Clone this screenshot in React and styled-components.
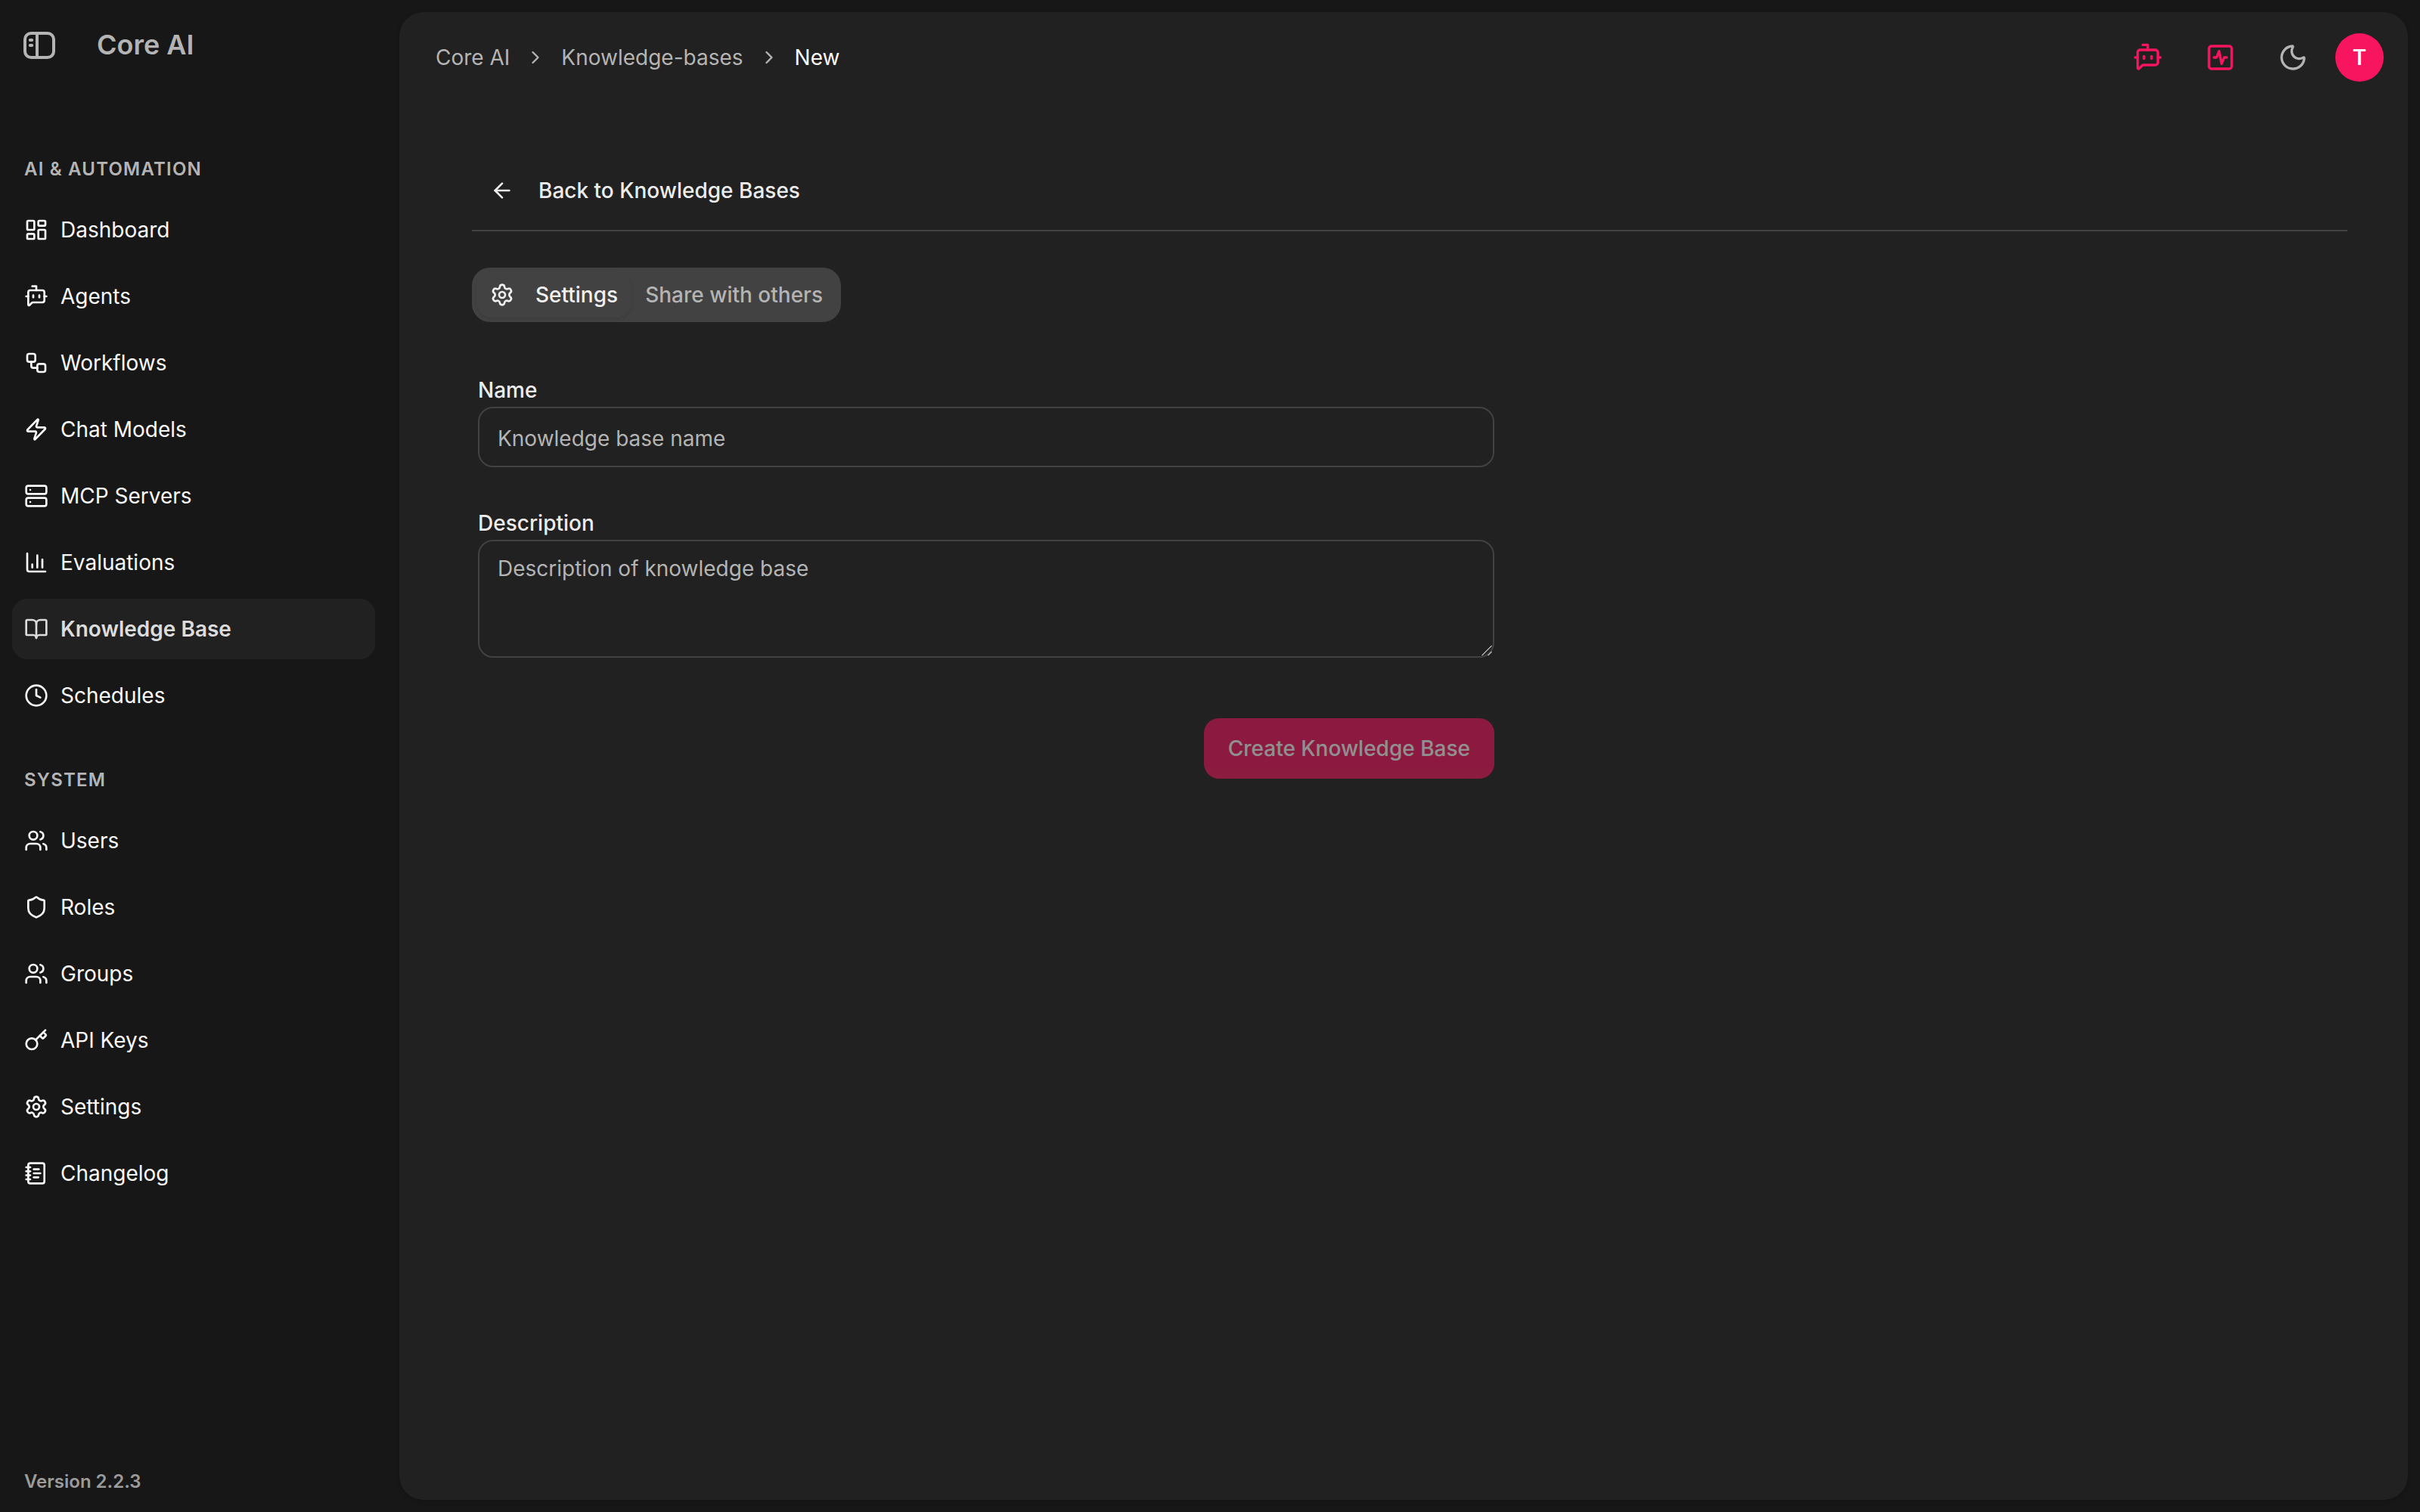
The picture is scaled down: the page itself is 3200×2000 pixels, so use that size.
import React, { useState } from 'react';
import styled, { createGlobalStyle, css } from 'styled-components';
import {
  LayoutDashboard,
  BotMessageSquare,
  Workflow,
  Zap,
  Server,
  BookOpen,
  Clock,
  Users,
  Shield,
  Key,
  Settings,
  NotebookText,
  ChevronRight,
  ArrowLeft,
  SquareActivity,
  Moon,
} from 'lucide-react';

const GlobalStyle = createGlobalStyle`
  * {
    box-sizing: border-box;
  }
  body {
    margin: 0;
    background: #171717;
    color: #ececec;
    font-family: Inter, "Liberation Sans", sans-serif;
    font-size: 28px;
    line-height: 40px;
    font-variation-settings: 'opsz' 14;
    -webkit-font-smoothing: antialiased;
  }
  button, input, textarea {
    font: inherit;
    font-variation-settings: inherit;
    color: inherit;
  }
`;

// bar chart with a short first bar
const EvaluationsIcon = ({ size = 24 }) => (
  <svg
    width={size}
    height={size}
    viewBox="0 0 24 24"
    fill="none"
    stroke="currentColor"
    strokeWidth="2"
    strokeLinecap="round"
    strokeLinejoin="round"
  >
    <path d="M3 3v16a2 2 0 0 0 2 2h16" />
    <path d="M8 17v-3" />
    <path d="M13 17V5" />
    <path d="M18 17V9" />
  </svg>
);

const SidebarIcon = () => (
  <ToggleIcon width="42" height="36" viewBox="0 0 42 36" fill="none" stroke="currentColor" strokeWidth="4">
    <rect x="2" y="2" width="38" height="32" rx="8" />
    <path d="M18 2v32" />
    <path d="M8.8 11h2.4M8.8 18h2.4" strokeLinecap="round" />
  </ToggleIcon>
);

const groups = [
  {
    label: 'AI & Automation',
    items: [
      { name: 'Dashboard', icon: LayoutDashboard },
      { name: 'Agents', icon: BotMessageSquare },
      { name: 'Workflows', icon: Workflow },
      { name: 'Chat Models', icon: Zap },
      { name: 'MCP Servers', icon: Server },
      { name: 'Evaluations', icon: EvaluationsIcon },
      { name: 'Knowledge Base', icon: BookOpen, active: true },
      { name: 'Schedules', icon: Clock },
    ],
  },
  {
    label: 'System',
    items: [
      { name: 'Users', icon: Users },
      { name: 'Roles', icon: Shield },
      { name: 'Groups', icon: Users },
      { name: 'API Keys', icon: Key },
      { name: 'Settings', icon: Settings },
      { name: 'Changelog', icon: NotebookText },
    ],
  },
];

const App = () => {
  const [name, setName] = useState('');
  const [description, setDescription] = useState('');

  return (
    <>
      <GlobalStyle />
      <Layout>
        <Sidebar>
          <Brand>
            <SidebarIcon />
            <BrandName>Core AI</BrandName>
          </Brand>
          <Nav>
            {groups.map((group) => (
              <Group key={group.label}>
                <GroupLabel>{group.label}</GroupLabel>
                {group.items.map(({ name, icon: Icon, active }) => (
                  <NavItem key={name} $active={active}>
                    <Icon size={32} />
                    <span>{name}</span>
                  </NavItem>
                ))}
              </Group>
            ))}
          </Nav>
          <Version>Version 2.2.3</Version>
        </Sidebar>

        <Panel>
          <Header>
            <Breadcrumb>
              <Crumb>Core AI</Crumb>
              <ChevronRight size={28} />
              <Crumb>Knowledge-bases</Crumb>
              <ChevronRight size={28} />
              <Crumb $current>New</Crumb>
            </Breadcrumb>
            <Actions>
              <IconButton $accent>
                <BotMessageSquare size={40} />
              </IconButton>
              <IconButton $accent>
                <SquareActivity size={40} />
              </IconButton>
              <IconButton>
                <Moon size={40} />
              </IconButton>
              <Avatar>T</Avatar>
            </Actions>
          </Header>

          <Content>
            <BackBar>
              <BackButton>
                <ArrowLeft size={32} />
                Back to Knowledge Bases
              </BackButton>
            </BackBar>

            <Tabs>
              <Tab $active>
                <Settings size={32} />
                Settings
              </Tab>
              <Tab>Share with others</Tab>
            </Tabs>

            <Form onSubmit={(e) => e.preventDefault()}>
              <Field>
                <Label htmlFor="name">Name</Label>
                <Input
                  id="name"
                  placeholder="Knowledge base name"
                  value={name}
                  onChange={(e) => setName(e.target.value)}
                />
              </Field>
              <Field>
                <Label htmlFor="description">Description</Label>
                <TextareaWrap>
                  <Textarea
                    id="description"
                    placeholder="Description of knowledge base"
                    value={description}
                    onChange={(e) => setDescription(e.target.value)}
                  />
                  <Grip width="16" height="16" viewBox="0 0 16 16">
                    <path d="M0.5 14.5L14 1" stroke="#000" />
                    <path d="M1.5 15L14.5 2M9.5 15L14.5 10" stroke="#b9b9b9" strokeWidth="1.4" />
                  </Grip>
                </TextareaWrap>
              </Field>
              <Submit disabled={!name}>Create Knowledge Base</Submit>
            </Form>
          </Content>
        </Panel>
      </Layout>
    </>
  );
};

const Layout = styled.div`
  display: flex;
  height: 100vh;
  overflow: hidden;
`;

const Sidebar = styled.aside`
  display: flex;
  flex-direction: column;
  flex: none;
  width: 512px;
  padding: 0 16px;
`;

const Brand = styled.div`
  display: flex;
  align-items: center;
  gap: 55px;
  height: 120px;
  padding: 0 0 2px 15px;
  color: #b4b4b4;
`;

const ToggleIcon = styled.svg`
  margin-top: 2px;
`;

const BrandName = styled.span`
  font-size: 36px;
  font-weight: 600;
`;

const Nav = styled.nav`
  display: flex;
  flex-direction: column;
  flex: 1;
  gap: 40px;
  padding-top: 72px;
`;

const Group = styled.div`
  display: flex;
  flex-direction: column;
  gap: 8px;
`;

const GroupLabel = styled.div`
  display: flex;
  align-items: center;
  height: 64px;
  padding: 0 16px;
  color: #b4b4b4;
  font-size: 24px;
  font-weight: 600;
  letter-spacing: 0.05em;
  text-transform: uppercase;
`;

const NavItem = styled.a`
  display: flex;
  align-items: center;
  gap: 16px;
  height: 80px;
  padding: 0 16px;
  border-radius: 20px;
  color: #f9f9f9;
  cursor: pointer;

  ${({ $active }) =>
    $active &&
    css`
      background: #212121;
      color: #dcdcdc;
      font-weight: 600;
    `}
`;

const Version = styled.div`
  padding: 0 16px 20px;
  color: #9b9b9b;
  font-size: 24px;
  font-weight: 600;
`;

const Panel = styled.main`
  display: flex;
  flex-direction: column;
  flex: 1;
  margin: 16px;
  border-radius: 32px;
  background: #212121;
  box-shadow: 0 2px 6px rgba(0, 0, 0, 0.2);
`;

const Header = styled.header`
  display: flex;
  align-items: center;
  justify-content: space-between;
  height: 120px;
  padding: 0 32px 0 48px;
`;

const Breadcrumb = styled.div`
  display: flex;
  align-items: center;
  gap: 20px;
  color: #b4b4b4;
`;

const Crumb = styled.span`
  color: ${({ $current }) => ($current ? '#f9f9f9' : '#b4b4b4')};
`;

const Actions = styled.div`
  display: flex;
  align-items: center;
  gap: 16px;
`;

const IconButton = styled.button`
  display: flex;
  align-items: center;
  justify-content: center;
  width: 80px;
  height: 80px;
  padding: 0;
  border: none;
  background: none;
  color: ${({ $accent }) => ($accent ? '#f7155f' : '#b4b4b4')};
`;

const Avatar = styled.div`
  display: flex;
  align-items: center;
  justify-content: center;
  width: 64px;
  height: 64px;
  border-radius: 50%;
  background: #f7155f;
  color: #fff;
  font-weight: 600;
`;

const Content = styled.div`
  display: flex;
  flex-direction: column;
  align-items: flex-start;
  padding: 76px 80px 0 96px;
`;

const BackBar = styled.div`
  align-self: stretch;
  padding-bottom: 12px;
  border-bottom: 2px solid #424242;
`;

const BackButton = styled.button`
  display: flex;
  align-items: center;
  gap: 32px;
  height: 80px;
  padding: 0 24px;
  border: none;
  background: none;
  font-weight: 500;
`;

const Tabs = styled.div`
  display: flex;
  height: 72px;
  margin-top: 48px;
  padding: 6px;
  border-radius: 24px;
  background: #424242;
`;

const Tab = styled.button`
  display: flex;
  align-items: center;
  gap: 28px;
  padding: 0 18px;
  border: none;
  border-radius: 20px;
  background: none;
  color: #b4b4b4;
  font-weight: 500;

  ${({ $active }) =>
    $active &&
    css`
      color: #f0f0f0;
      box-shadow: 0 2px 4px rgba(0, 0, 0, 0.1);
    `}
`;

const Form = styled.form`
  display: flex;
  flex-direction: column;
  gap: 60px;
  width: 1344px;
  margin: 76px 0 0 8px;
`;

const Field = styled.div`
  display: flex;
  flex-direction: column;
  gap: 8px;
`;

const Label = styled.label`
  font-weight: 500;
  line-height: 28px;
`;

const fieldStyles = css`
  display: block;
  width: 100%;
  border: 2px solid #424242;
  border-radius: 20px;
  outline: none;
  background: #212121;

  &::placeholder {
    color: #b4b4b4;
  }
`;

const Input = styled.input`
  ${fieldStyles}
  height: 80px;
  padding: 3px 24px 0;
`;

const TextareaWrap = styled.div`
  position: relative;
`;

const Textarea = styled.textarea`
  ${fieldStyles}
  height: 156px;
  padding: 16px 24px;
  resize: none;
`;

const Grip = styled.svg`
  position: absolute;
  right: 2px;
  bottom: 2px;
`;

const Submit = styled.button`
  align-self: flex-end;
  height: 80px;
  margin-top: 20px;
  padding: 0 32px;
  border: none;
  border-radius: 20px;
  background: #f7155f;
  color: #fff;
  font-weight: 500;

  &:disabled {
    opacity: 0.5;
  }
`;

export default App;
